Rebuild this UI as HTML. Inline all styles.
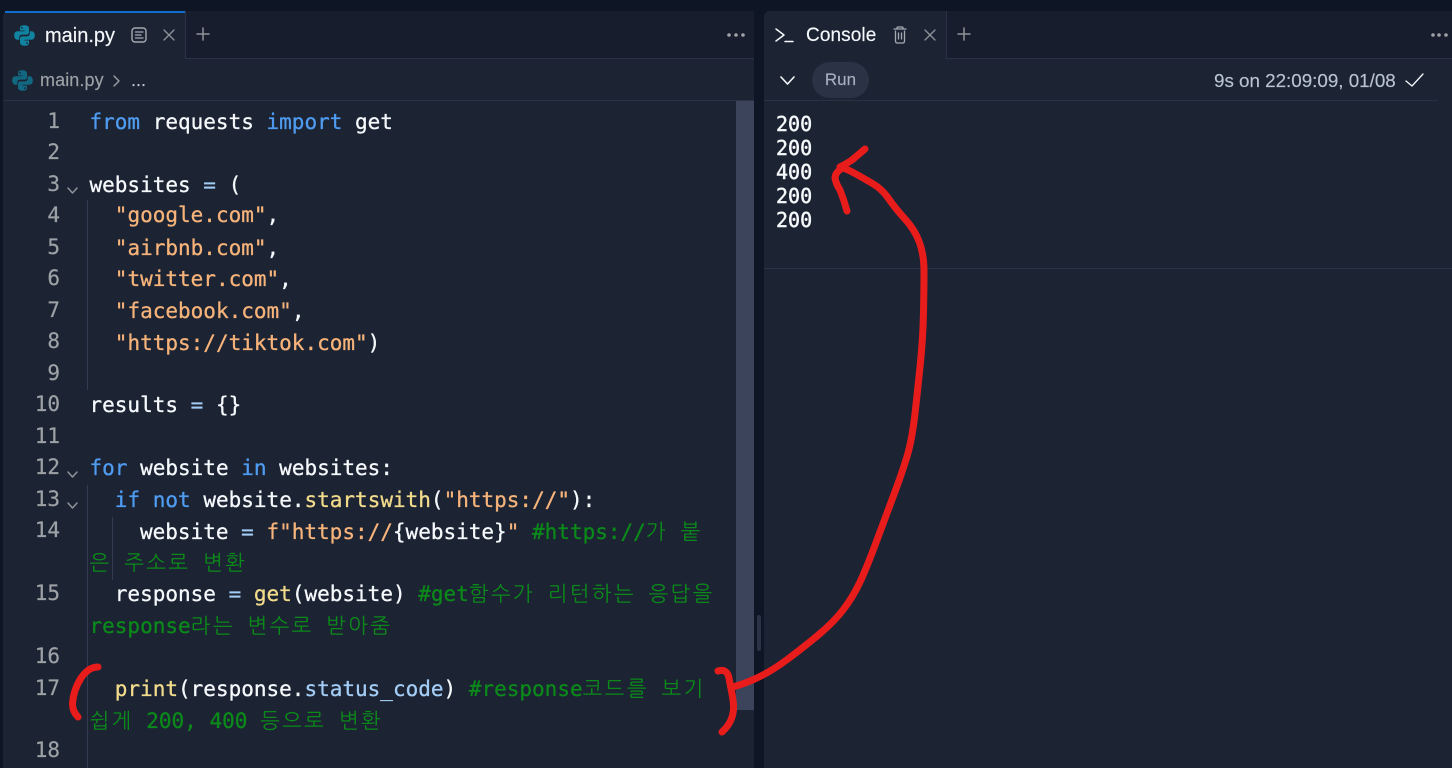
<!DOCTYPE html>
<html lang="ko"><head><meta charset="utf-8"><style>
html,body{margin:0;padding:0;width:1452px;height:768px;overflow:hidden;background:#0e1525}
div,span{box-sizing:border-box}
.a{position:absolute}
#root{position:relative;width:1452px;height:768px;overflow:hidden;background:#0e1525;font-family:"Liberation Sans",sans-serif;-webkit-text-stroke:.15px currentColor}
.l{position:absolute;left:89.5px;white-space:pre;font:21px/31.5px "DejaVu Sans Mono","Liberation Mono",monospace;color:#f5f9fc;height:31.5px;-webkit-text-stroke:.3px currentColor}
.n{position:absolute;left:0;width:60px;text-align:right;font:21px/31.5px "DejaVu Sans Mono",monospace;color:#9da2a6;-webkit-text-stroke:.2px currentColor}
.k{color:#4f9cf0}.s{color:#f6b37a}.f{color:#f2dc8c}.p{color:#a3cdf5}.o{color:#a3cdf5}
.c{color:#0b8a1a}
.h{font-family:"NanumGothic","Noto Sans CJK KR",monospace;font-weight:400;color:#0b8a1a;letter-spacing:2.3px;-webkit-text-stroke:0}
.out{position:absolute;left:776px;font:20px/24px "DejaVu Sans Mono",monospace;color:#f5f9fc;white-space:pre;-webkit-text-stroke:.45px currentColor}
</style></head><body><div id="root">
<div class="a" style="left:3px;top:11px;width:751px;height:757px;background:#1c2333;border-radius:6px 6px 0 0"></div>
<div class="a" style="left:764px;top:11px;width:688px;height:757px;background:#1c2333;border-radius:6px 0 0 0"></div>
<div class="a" style="left:185px;top:11px;width:569px;height:48px;background:#171d2d;border-bottom:1px solid #2b3245;border-left:1px solid #2b3245"></div>
<div class="a" style="left:5px;top:11px;width:180px;height:2px;background:#0f6fd0"></div>
<div class="a" style="left:946px;top:11px;width:506px;height:48px;background:#171d2d;border-bottom:1px solid #2b3245;border-left:1px solid #2b3245"></div>
<div class="a" style="left:3px;top:100px;width:751px;height:1px;background:#2b3245"></div>
<div class="a" style="left:764px;top:100px;width:674px;height:1px;background:#2b3245"></div>
<div class="a" style="left:764px;top:268px;width:688px;height:1px;background:#2b3245"></div>
<div class="a" style="left:736px;top:101px;width:18px;height:609px;background:#3c445c"></div>
<div class="a" style="left:757px;top:615px;width:4px;height:36px;background:#2b3245;border-radius:2px"></div>
<div class="a" style="left:87px;top:200px;width:1px;height:190px;background:#343b50"></div>
<div class="a" style="left:87px;top:485px;width:1px;height:283px;background:#343b50"></div>
<div class="a" style="left:112px;top:517px;width:1px;height:63px;background:#343b50"></div>

<svg class="a" style="left:14px;top:25px" width="21" height="21" viewBox="0 0 21 21"><path fill="#0f83a0" d="M10.3 0.3C6.5 0.3 6 1.8 6 3.3V5.5H10.6V6.3H3.5C1.4 6.3 0.2 8 0.2 10.5C0.2 13 1.4 14.7 3.4 14.7H5.3V12.2C5.3 10.4 6.8 9.6 8.4 9.6H12.7C14 9.6 15 8.6 15 7.2V3.3C15 1.6 13.4 0.3 10.3 0.3Z"/><path fill="#0f83a0" d="M10.7 20.7C14.5 20.7 15 19.2 15 17.7V15.5H10.4V14.7H17.5C19.6 14.7 20.8 13 20.8 10.5C20.8 8 19.6 6.3 17.6 6.3H15.7V8.8C15.7 10.6 14.2 11.4 12.6 11.4H8.3C7 11.4 6 12.4 6 13.8V17.7C6 19.4 7.6 20.7 10.7 20.7Z"/><circle cx="8" cy="2.9" r=".9" fill="#1c2333"/><circle cx="13" cy="18.1" r=".9" fill="#1c2333"/></svg>
<svg class="a" style="left:12px;top:70px;opacity:.72" width="21" height="21" viewBox="0 0 21 21"><path fill="#0f83a0" d="M10.3 0.3C6.5 0.3 6 1.8 6 3.3V5.5H10.6V6.3H3.5C1.4 6.3 0.2 8 0.2 10.5C0.2 13 1.4 14.7 3.4 14.7H5.3V12.2C5.3 10.4 6.8 9.6 8.4 9.6H12.7C14 9.6 15 8.6 15 7.2V3.3C15 1.6 13.4 0.3 10.3 0.3Z"/><path fill="#0f83a0" d="M10.7 20.7C14.5 20.7 15 19.2 15 17.7V15.5H10.4V14.7H17.5C19.6 14.7 20.8 13 20.8 10.5C20.8 8 19.6 6.3 17.6 6.3H15.7V8.8C15.7 10.6 14.2 11.4 12.6 11.4H8.3C7 11.4 6 12.4 6 13.8V17.7C6 19.4 7.6 20.7 10.7 20.7Z"/><circle cx="8" cy="2.9" r=".9" fill="#1c2333"/><circle cx="13" cy="18.1" r=".9" fill="#1c2333"/></svg>

<div class="a" style="left:45px;top:24px;font-size:20px;line-height:24px;color:#f5f9fc">main.py</div>
<div class="a" style="left:40px;top:69px;font-size:18px;line-height:23px;letter-spacing:.1px;color:#9da2a6">main.py</div>
<div class="a" style="left:131px;top:69px;font-size:18px;line-height:23px;color:#c2c8cc">...</div>

<svg class="a" style="left:0;top:0;pointer-events:none" width="1452" height="768" fill="none" stroke-linecap="round" stroke-linejoin="round">
<rect x="132" y="28" width="14" height="14" rx="3" stroke="#a5aab0" stroke-width="1.4"/>
<path d="M135.500 32H143M135.500 35H141M135.500 38H143" stroke="#a5aab0" stroke-width="1.3"/>
<path d="M164 30L174 40M174 30L164 40" stroke="#8f949a" stroke-width="1.3"/>
<path d="M203 28V40M197 34H209" stroke="#8f949a" stroke-width="1.5"/>
<path d="M114 76L119 81L114 86" stroke="#9da2a6" stroke-width="1.4"/>
<path d="M68 188L72.500 193L77 188" stroke="#8f949a" stroke-width="1.5"/>
<path d="M68 472L72.500 477L77 472" stroke="#8f949a" stroke-width="1.5"/>
<path d="M68 503L72.500 508L77 503" stroke="#8f949a" stroke-width="1.5"/>
<path d="M776 29L784 35L776 41M785 41.500H793" stroke="#f5f9fc" stroke-width="1.5"/>
<path d="M894 29H906M897 29V28Q897 27 898 27H902Q903 27 903 28V29M895.500 31V41Q895.500 43 897.500 43H902.500Q904.500 43 904.500 41V31M898.500 33V39M901.500 33V39" stroke="#a5aab0" stroke-width="1.3"/>
<path d="M925 30L935 40M935 30L925 40" stroke="#8f949a" stroke-width="1.3"/>
<path d="M964 28V40M958 34H970" stroke="#8f949a" stroke-width="1.5"/>
<path d="M781 77L787.500 84L794 77" stroke="#f5f9fc" stroke-width="1.6"/>
<path d="M1406 81L1412 86L1423 74" stroke="#f5f9fc" stroke-width="1.3"/>
<g fill="#9da2a6" stroke="none"><circle cx="729" cy="35" r="1.8"/><circle cx="736" cy="35" r="1.8"/><circle cx="743" cy="35" r="1.8"/><circle cx="1433" cy="35" r="1.8"/><circle cx="1439" cy="35" r="1.8"/><circle cx="1446" cy="35" r="1.8"/></g>
</svg>

<div class="a" style="left:806px;top:24px;font-size:19px;line-height:24px;letter-spacing:.1px;color:#f5f9fc">Console</div>
<div class="a" style="left:812px;top:62px;width:57px;height:36px;border-radius:18px;background:#2b3245;color:#a5b0bd;font-size:17px;line-height:36px;text-align:center">Run</div>
<div class="a" style="left:1214px;top:69px;font-size:18.800px;line-height:23px;color:#b8c4d0;white-space:pre">9s on 22:09:09, 01/08</div>

<div class="out" style="top:112px">200
200
400
200
200</div>

<div class="n" style="top:105.500px">1</div><div class="n" style="top:137px">2</div><div class="n" style="top:168.500px">3</div><div class="n" style="top:200px">4</div><div class="n" style="top:231.500px">5</div><div class="n" style="top:263px">6</div><div class="n" style="top:294.500px">7</div><div class="n" style="top:326px">8</div><div class="n" style="top:357.500px">9</div><div class="n" style="top:389px">10</div><div class="n" style="top:420.500px">11</div><div class="n" style="top:452px">12</div><div class="n" style="top:483.500px">13</div><div class="n" style="top:515px">14</div><div class="n" style="top:578px">15</div><div class="n" style="top:641px">16</div><div class="n" style="top:672.500px">17</div><div class="n" style="top:735px">18</div>

<div class="l" style="top:106.500px"><span class="k">from</span> requests <span class="k">import</span> get</div>
<div class="l" style="top:169.500px">websites <span class="o">=</span> (</div>
<div class="l" style="top:200px">  <span class="s">"google.com"</span>,</div>
<div class="l" style="top:232.500px">  <span class="s">"airbnb.com"</span>,</div>
<div class="l" style="top:264px">  <span class="s">"twitter.com"</span>,</div>
<div class="l" style="top:295.500px">  <span class="s">"facebook.com"</span>,</div>
<div class="l" style="top:328px">  <span class="s">"https://tiktok.com"</span>)</div>
<div class="l" style="top:390px">results <span class="o">=</span> {}</div>
<div class="l" style="top:453px"><span class="k">for</span> website <span class="k">in</span> websites:</div>
<div class="l" style="top:484.500px">  <span class="k">if</span> <span class="k">not</span> website.<span class="f">startswith</span>(<span class="s">"https://"</span>):</div>
<div class="l" style="top:517px;left:140px">website <span class="o">=</span> <span class="s">f"https://</span>{website}<span class="s">"</span> <span class="c">#https://<span class="h">가</span> <span class="h">붙</span></span></div>
<div class="l" style="top:548px"><span class="h">은</span> <span class="h">주소로</span> <span class="h">변환</span></div>
<div class="l" style="top:579px">  response <span class="o">=</span> <span class="f">get</span>(website) <span class="c">#get<span class="h">함수가</span> <span class="h">리턴하는</span> <span class="h">응답을</span></span></div>
<div class="l" style="top:611px"><span class="c">response<span class="h">라는</span> <span class="h">변수로</span> <span class="h">받아줌</span></span></div>
<div class="l" style="top:673.500px">  <span class="f">print</span>(response.<span class="p">status_code</span>) <span class="c">#response<span class="h">코드를</span> <span class="h">보기</span></span></div>
<div class="l" style="top:706px"><span class="h">쉽게</span> <span class="c">200, 400</span> <span class="h">등으로</span> <span class="h">변환</span></div>

<svg class="a" style="left:0;top:0" width="1452" height="768" fill="none" stroke="#e91c1c" stroke-width="7" stroke-linecap="round" stroke-linejoin="round">
<path d="M98 667C91 667 86 671 81 678C76 686 73 695 72.500 704C72.500 710 75 714 78 717"/>
<path d="M718 671C724 669 728 672 729 678C730 685 732 692 733 700C735 712 732 723 722 732"/>
<path d="M733 687Q747 683 760 676.500Q773 670 786.500 660Q800 650 816.500 636.500Q833 623 843 610Q853 597 860 582Q867 567 877 540Q887 513 894.500 493Q902 473 907 456.500Q912 440 915 413.500Q918 387 920.500 362Q923 337 923.500 312Q924 287 924 271Q924 255 919.500 242.500Q915 230 905 219Q895 208 888.500 198.500Q882 189 872.500 183.500Q863 178 855 173.500Q847 169 840 167"/>
<path d="M865 149Q858 155 852 160Q846 164 840 167M844 167Q835 172 835 178Q836 184 840 190Q844 200 847 211"/>
</svg>
</div></body></html>
